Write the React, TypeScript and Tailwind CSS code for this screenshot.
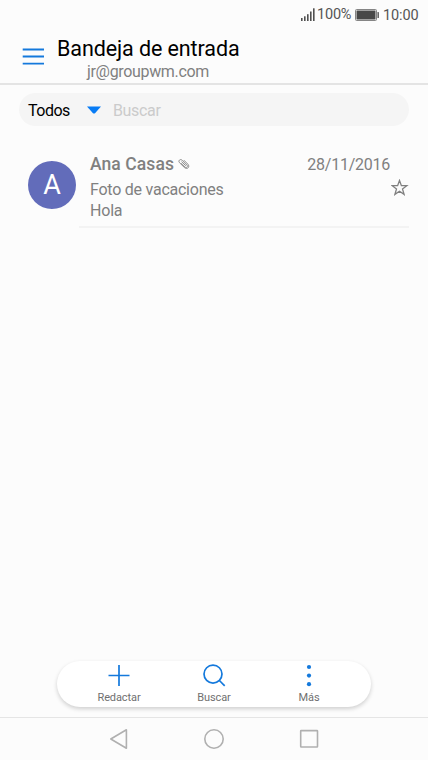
import { useState } from "react";

const SignalIcon = () => (
  <svg width="14" height="13" viewBox="0 0 14 13" fill="#505050">
    <rect x="0" y="10" width="1.6" height="3" />
    <rect x="3" y="8.3" width="1.6" height="4.7" />
    <rect x="6" y="6.2" width="1.6" height="6.8" />
    <rect x="9" y="3.5" width="1.6" height="9.5" />
    <rect x="12" y="0.3" width="1.6" height="12.7" />
  </svg>
);

const BatteryIcon = () => (
  <svg width="25" height="12" viewBox="0 0 25 12">
    <rect x="0.5" y="0.5" width="21" height="11" rx="1" fill="none" stroke="#858585" />
    <rect x="1.5" y="1.5" width="19" height="9" fill="#484848" />
    <rect x="22.4" y="3" width="1.6" height="6" rx="0.5" fill="#686868" />
  </svg>
);

const ClipIcon = () => (
  <svg width="12" height="12" viewBox="0 0 12 12" fill="none" stroke="#808080" strokeWidth="0.9" strokeLinecap="round">
    <path d="M3.2 5.5 7 9.1c1.5 1.3 3.3-.6 1.9-2L4.1 2.2C2.2.5-.2 2.8 1.5 4.7l5 4.9c2.8 2.4 5.8-.8 3.4-3.4L6.1 2.4" />
    <path d="M7.5 7.5 3.8 3.9" />
  </svg>
);

const actions = [
  {
    label: "Redactar",
    icon: <path d="M11 1v21M.5 11.5h21" />,
  },
  {
    label: "Buscar",
    icon: (
      <>
        <circle cx="10" cy="10.1" r="9" />
        <path d="m16.4 16.5 5.3 5.3" />
      </>
    ),
  },
  {
    label: "Más",
    icon: (
      <g fill="#1479dc" stroke="none">
        <circle cx="11" cy="3" r="2.1" />
        <circle cx="11" cy="11.6" r="2.1" />
        <circle cx="11" cy="20.2" r="2.1" />
      </g>
    ),
  },
];

const App = () => {
  const [search, setSearch] = useState("");

  return (
    <div className="flex h-[760px] w-[428px] flex-col bg-[#fcfcfc] font-['Roboto',sans-serif] text-[#808080]">
      <div className="flex h-[29px] items-center pl-[301px] text-[#555]">
        <SignalIcon />
        <span className="mt-px ml-[2px] w-[38px] text-[14.5px] leading-none tracking-[-0.2px] whitespace-nowrap">100%</span>
        <BatteryIcon />
        <span className="mt-[3px] ml-[3px] text-[14.5px] leading-none tracking-[-0.1px]">10:00</span>
      </div>

      <header className="flex h-[56px] shrink-0 border-b-2 border-[#e4e4e4] pl-[22px]">
        <button type="button" aria-label="Menú" className="mt-[18px] h-[19px] w-[23px]">
          <svg width="23" height="19" viewBox="0 0 23 19" stroke="#1479dc" strokeWidth="1.8">
            <path d="M.7 2.5h21.3M.7 9.5h21.3M.7 16.7h21.3" />
          </svg>
        </button>
        <div className="ml-[12px]">
          <h1 className="mt-[7px] text-[21.5px] leading-[26px] tracking-[-0.09px] text-black">Bandeja de entrada</h1>
          <p className="mt-px ml-[30px] text-[16px] leading-[18px] tracking-[-0.33px]">jr@groupwm.com</p>
        </div>
      </header>

      <div className="mx-[19px] mt-[8px] flex h-[33px] shrink-0 items-center rounded-full bg-[#f5f5f5] pl-[9px] text-[16px]">
        <span className="mt-[2px] w-[59px] tracking-[-0.5px] text-black">Todos</span>
        <svg width="14" height="8" viewBox="0 0 14 8" fill="#087cf5">
          <path d="M0 .5h14L8 7.2q-1 .8-2 0z" />
        </svg>
        <input
          type="text"
          value={search}
          onChange={(e) => setSearch(e.target.value)}
          placeholder="Buscar"
          className="mt-[2px] ml-[12px] w-[250px] tracking-[-0.35px] outline-none placeholder:text-[#cbcbcb]"
        />
      </div>

      <main className="flex flex-1 items-start pt-[27px] pl-[28px]">
        <div className="mt-[7.5px] flex size-[48px] items-center justify-center rounded-full bg-[#626cba] pt-[2px] text-[27px] text-white">A</div>
        <div className="ml-[3px] h-[75px] w-[330px] border-b-2 border-[#f3f3f3] pl-[11px]">
          <div className="flex h-[23px] items-center">
            <span className="text-[17.5px] font-medium tracking-[0.08px]">Ana Casas</span>
            <span className="mb-[2px] ml-[4px]"><ClipIcon /></span>
            <span className="mt-px mr-[19px] ml-auto text-[16px] tracking-[-0.25px]">28/11/2016</span>
          </div>
          <div className="flex h-[25px] items-center">
            <span className="mt-[2px] text-[16px] tracking-[-0.24px]">Foto de vacaciones</span>
            <svg className="mb-px ml-auto" width="18" height="18" viewBox="0 0 18 18" fill="none" stroke="#808080" strokeWidth="1.3">
              <path d="m8.5 1.5 1.9 5.2h5.4l-4.3 3.3 1.6 5.4-4.6-3.1-4.6 3.1L5.5 10 1.2 6.7h5.4z" />
            </svg>
          </div>
          <p className="text-[16px] leading-[20px] tracking-[-0.2px]">Hola</p>
        </div>
      </main>

      <div className="mr-auto mb-[10px] ml-[57px] flex h-[46px] w-[314px] shrink-0 justify-center rounded-full bg-white pt-[3px] shadow-[0_2px_4px_rgba(0,0,0,0.18)]">
        {actions.map((action) => (
          <button key={action.label} type="button" className="flex w-[95px] flex-col items-center">
            <svg width="23" height="23" viewBox="0 0 23 23" fill="none" stroke="#1479dc" strokeWidth="1.7">
              {action.icon}
            </svg>
            <span className="mt-[4px] text-[11px] leading-[14px] tracking-[-0.1px] text-[#707070]">{action.label}</span>
          </button>
        ))}
      </div>

      <nav className="flex h-[43px] shrink-0 items-center justify-center border-t border-[#e5e5e5]">
        <svg width="210" height="22" viewBox="0 0 210 22" fill="none" stroke="#b0b0b0" strokeWidth="1.6" strokeLinejoin="round">
          <path d="M1.8 11 17.4 1.8v18.4z" />
          <circle cx="105" cy="11" r="9.2" />
          <rect x="191.7" y="2.6" width="16.8" height="16.4" rx="0.5" />
        </svg>
      </nav>
    </div>
  );
};

export default App;
